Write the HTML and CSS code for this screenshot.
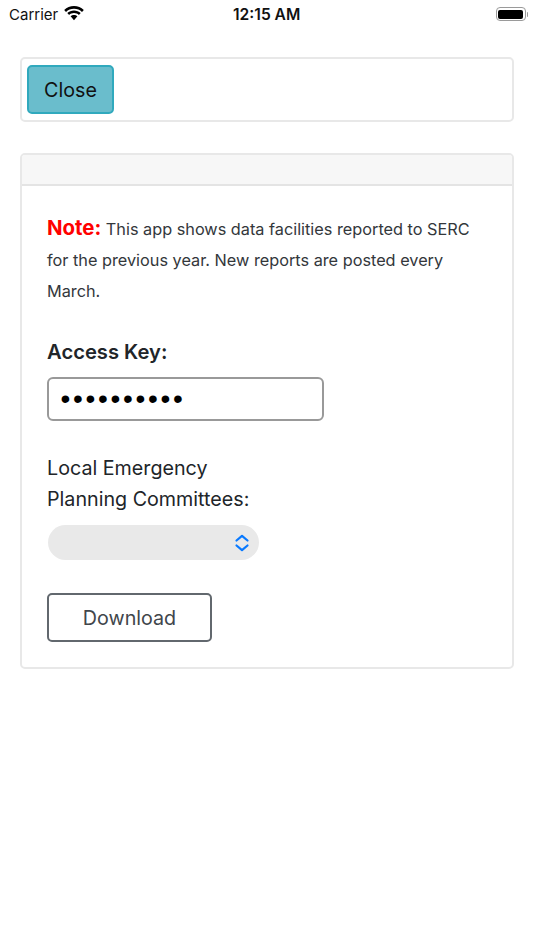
FILE: index.html
```html
<!DOCTYPE html>
<html lang="en">
<head>
    <meta charset="UTF-8">
    <meta name="viewport" content="width=device-width, initial-scale=1.0">
    <title>Access Key</title>
    <link rel="stylesheet" href="styles.css">
</head>
<body>
    <div class="status-bar">
        <div class="status-left">
            <span class="carrier">Carrier</span>
            <svg class="wifi" width="20" height="15" viewBox="0 0 20 15">
                <path d="M10 2.700c3.100 0 5.900 1.200 8 3.200l1.800-2C17.200 1.500 13.800 0 10 0S2.800 1.500.2 3.900l1.800 2c2.100-2 4.900-3.200 8-3.200z"/>
                <path d="M10 7.100c1.900 0 3.600.7 4.900 1.900l1.800-2C14.900 5.400 12.600 4.400 10 4.400S5.100 5.400 3.300 7l1.800 2c1.300-1.200 3-1.900 4.900-1.900z"/>
                <path d="M10 8.900c-1.300 0-2.500.5-3.400 1.300L10 14.300l3.400-4.100c-.9-.8-2.100-1.300-3.400-1.300z"/>
            </svg>
        </div>
        <span class="clock">12:15 AM</span>
        <div class="battery">
            <div class="battery-body"><div class="battery-fill"></div></div>
            <div class="battery-cap"></div>
        </div>
    </div>

    <div class="page">
        <div class="card">
            <div class="card-body-small">
                <button class="btn-close">Close</button>
            </div>
        </div>

        <div class="card">
            <div class="card-header"></div>
            <div class="card-body">
                <p class="note"><strong>Note:</strong> This app shows data facilities reported to SERC for the previous year. New reports are posted every March.</p>

                <label class="key-label" for="accessKey">Access Key:</label>
                <input class="key-input" id="accessKey" type="password" value="1234567890">

                <label class="lepc-label" for="lepc">Local Emergency<br>Planning Committees:</label>
                <div class="select-box" id="lepc">
                    <svg width="16" height="18" viewBox="0 0 16 18" fill="none" stroke="#0a7aff" stroke-width="2.200" stroke-linecap="round" stroke-linejoin="round">
                        <path d="M2.500 6.500L8 1.800l5.500 4.700"/>
                        <path d="M2.500 11.500L8 16.200l5.500-4.700"/>
                    </svg>
                </div>

                <button class="btn-download">Download</button>
            </div>
        </div>
    </div>
</body>
</html>
```

FILE: styles.css
```css
* {
    box-sizing: border-box;
}
body {
    margin: 0;
    background: white;
    font-family: 'Inter', 'Liberation Sans', sans-serif;
    color: #212529;
}
.status-bar {
    display: flex;
    align-items: center;
    justify-content: space-between;
    height: 28px;
    padding: 0 0 0 9px;
    position: relative;
    color: #111;
}
.status-left {
    display: flex;
    align-items: center;
    gap: 6px;
}
.carrier {
    font-size: 15px;
}
.wifi {
    margin-bottom: 1px;
}
.clock {
    position: absolute;
    left: 233px;
    font-size: 15.600px;
    font-weight: 600;
}
.battery {
    display: flex;
    align-items: center;
    gap: 1px;
    padding-right: 6px;
}
.battery-body {
    width: 30px;
    height: 14px;
    border: 1px solid #9a9a9a;
    border-radius: 4px;
    padding: 1.500px;
}
.battery-fill {
    height: 100%;
    background: black;
    border-radius: 2px;
}
.battery-cap {
    width: 1.500px;
    height: 5px;
    background: #9a9a9a;
    border-radius: 0 1px 1px 0;
}
.page {
    padding: 29px 20px 0;
}
.card {
    border: 2px solid #e8e8e8;
    border-radius: 5px;
    margin-bottom: 31px;
    background: white;
    overflow: hidden;
}
.card-body-small {
    padding: 6px 5px;
}
.btn-close {
    display: block;
    width: 87px;
    height: 49px;
    background: #6abdcc;
    border: 2px solid #30a9bd;
    border-radius: 5px;
    font-family: inherit;
    font-size: 19.700px;
    color: #111;
    padding: 0;
}
.card-header {
    height: 31px;
    background: #f7f7f7;
    border-bottom: 2px solid #e4e4e4;
}
.card-body {
    padding: 26px 25px 25px;
}
.note {
    margin: 0 0 30px;
    font-size: 16.280px;
    line-height: 31px;
    color: #33373b;
}
.note strong {
    color: #ff0000;
    font-size: 20.400px;
    font-weight: 700;
}
.key-label {
    display: block;
    font-size: 20.200px;
    font-weight: 600;
    line-height: 30px;
    margin-bottom: 10px;
}
.key-input {
    display: block;
    width: 277px;
    height: 44px;
    padding: 0 11.500px;
    border: 2px solid #999;
    border-radius: 6px;
    font-family: 'Liberation Sans', sans-serif;
    font-size: 28px;
    letter-spacing: 2.700px;
    color: black;
    background: white;
    outline: none;
    margin-bottom: 32px;
}
.lepc-label {
    display: block;
    font-size: 19.700px;
    line-height: 31px;
    margin-bottom: 10px;
}
.select-box {
    display: flex;
    align-items: center;
    justify-content: flex-end;
    width: 211px;
    height: 35px;
    margin-left: 1px;
    margin-bottom: 33px;
    padding-right: 9px;
    border-radius: 18px;
    background: #e9e9e9;
}
.btn-download {
    display: block;
    width: 165px;
    height: 49px;
    background: white;
    border: 2px solid #62686e;
    border-radius: 5px;
    font-family: inherit;
    font-size: 19.700px;
    color: #41464b;
    padding: 0;
}
```
